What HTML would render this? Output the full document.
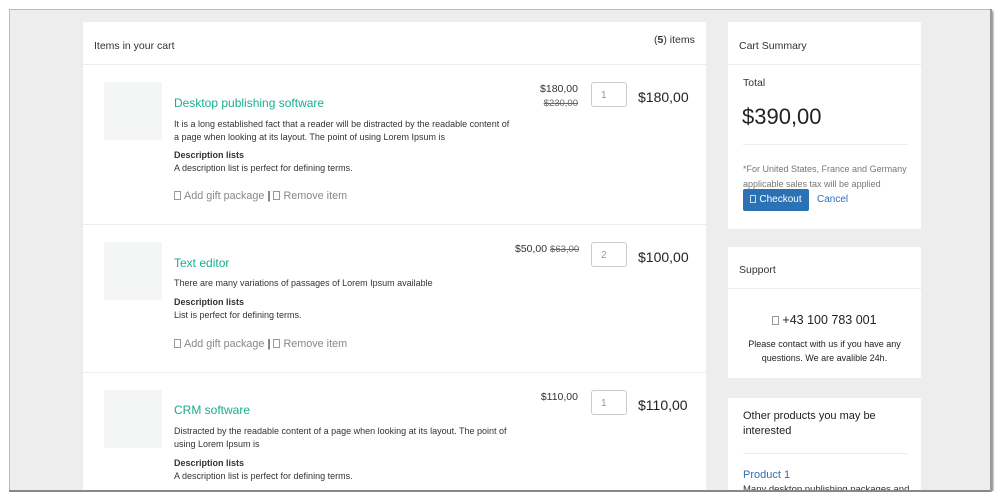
<!DOCTYPE html>
<html><head><meta charset="utf-8"><style>
*{margin:0;padding:0;box-sizing:border-box}
body{width:1000px;height:500px;background:#fff;font-family:"Liberation Sans",Arial,sans-serif;color:#333;position:relative;overflow:hidden}
.frame{position:absolute;left:9px;top:9px;width:982px;height:482px;background:#ededed;border:1px solid #bbb;box-shadow:2px 2px 2px #777}
.p{position:absolute;background:#fff}
.a{position:absolute;white-space:nowrap}
.hl{position:absolute;height:1px;background:#e8eded}
.img{position:absolute;width:58px;height:58px;background:#f4f6f6}
.t{font-size:12px;color:#1aae8c}
.d{font-size:9px;color:#333}
.b{font-size:9px;font-weight:bold}
.l{font-size:10.8px;color:#888}
.ic{display:inline-block;width:7px;height:9px;border:1px solid #999;vertical-align:-1px;margin-right:3px}
.pr{font-size:10.5px;text-align:right;width:80px}
.s{font-size:9.5px;color:#666;text-decoration:line-through}
.in{position:absolute;width:36px;height:25px;border:1px solid #ccc;border-radius:3px;font-size:10px;color:#999;padding:7px 0 0 9px}
.tot{font-size:14px;color:#222}
</style></head><body>
<div class="frame"></div>
<div class="p" style="left:83px;top:22px;width:623px;height:478px"></div>
<div class="hl" style="left:83px;top:64px;width:623px"></div>
<div class="hl" style="left:83px;top:224px;width:623px"></div>
<div class="hl" style="left:83px;top:372px;width:623px"></div>
<div class="a" style="left:94px;top:40px;font-size:10.5px">Items in your cart</div>
<div class="a" style="left:654px;top:34px;font-size:10.5px">(<b>5</b>) items</div>

<div class="img" style="left:104px;top:82px"></div>
<div class="a t" style="left:174px;top:96px">Desktop publishing software</div>
<div class="a d" style="left:174px;top:118px;line-height:12.5px">It is a long established fact that a reader will be distracted by the readable content of<br>a page when looking at its layout. The point of using Lorem Ipsum is</div>
<div class="a b" style="left:174px;top:150px">Description lists</div>
<div class="a d" style="left:174px;top:163px">A description list is perfect for defining terms.</div>
<div class="a l" style="left:174px;top:190px"><span class="ic"></span>Add gift package <b style="color:#555">|</b> <span class="ic"></span>Remove item</div>
<div class="a pr" style="left:498px;top:83px">$180,00</div>
<div class="a pr s" style="left:498px;top:98px">$230,00</div>
<div class="in" style="left:591px;top:82px">1</div>
<div class="a tot" style="left:638px;top:89px">$180,00</div>

<div class="img" style="left:104px;top:242px"></div>
<div class="a t" style="left:174px;top:256px">Text editor</div>
<div class="a d" style="left:174px;top:278px">There are many variations of passages of Lorem Ipsum available</div>
<div class="a b" style="left:174px;top:297px">Description lists</div>
<div class="a d" style="left:174px;top:310px">List is perfect for defining terms.</div>
<div class="a l" style="left:174px;top:338px"><span class="ic"></span>Add gift package <b style="color:#555">|</b> <span class="ic"></span>Remove item</div>
<div class="a" style="left:515px;top:243px;font-size:10.5px">$50,00 <span class="s">$63,00</span></div>
<div class="in" style="left:591px;top:242px">2</div>
<div class="a tot" style="left:638px;top:249px">$100,00</div>

<div class="img" style="left:104px;top:390px"></div>
<div class="a t" style="left:174px;top:403px">CRM software</div>
<div class="a d" style="left:174px;top:425px;line-height:12.5px">Distracted by the readable content of a page when looking at its layout. The point of<br>using Lorem Ipsum is</div>
<div class="a b" style="left:174px;top:458px">Description lists</div>
<div class="a d" style="left:174px;top:471px">A description list is perfect for defining terms.</div>
<div class="a pr" style="left:498px;top:391px">$110,00</div>
<div class="in" style="left:591px;top:390px">1</div>
<div class="a tot" style="left:638px;top:397px">$110,00</div>

<div class="p" style="left:728px;top:22px;width:193px;height:207px"></div>
<div class="hl" style="left:728px;top:64px;width:193px"></div>
<div class="a" style="left:739px;top:40px;font-size:10.5px">Cart Summary</div>
<div class="a" style="left:743px;top:77px;font-size:10.5px">Total</div>
<div class="a" style="left:742px;top:104px;font-size:22px;color:#222">$390,00</div>
<div class="hl" style="left:743px;top:144px;width:164px"></div>
<div class="a" style="left:743px;top:162px;font-size:9px;color:#777;line-height:15px">*For United States, France and Germany<br>applicable sales tax will be applied</div>
<div class="a" style="left:743px;top:189px;width:66px;height:22px;background:#2b72b5;border-radius:2px;color:#fff;font-size:10px;padding-top:5px;text-align:center"><span class="ic" style="border-color:#cde;width:6px;height:8px"></span>Checkout</div>
<div class="a" style="left:817px;top:194px;font-size:10px;color:#2b72b5">Cancel</div>

<div class="p" style="left:728px;top:247px;width:193px;height:131px"></div>
<div class="hl" style="left:728px;top:288px;width:193px"></div>
<div class="a" style="left:739px;top:264px;font-size:10.5px">Support</div>
<div class="a" style="left:728px;width:193px;text-align:center;top:313px;font-size:12.5px;color:#222"><span class="ic"></span>+43 100 783 001</div>
<div class="a" style="left:728px;width:193px;text-align:center;top:337px;font-size:9px;line-height:14px;color:#222">Please contact with us if you have any<br>questions. We are avalible 24h.</div>

<div class="p" style="left:728px;top:398px;width:193px;height:102px"></div>
<div class="a" style="left:743px;top:409px;font-size:11px;line-height:15px;color:#222">Other products you may be<br>interested</div>
<div class="hl" style="left:743px;top:453px;width:164px"></div>
<div class="a" style="left:743px;top:469px;font-size:11px;color:#2b72b5">Product 1</div>
<div class="a" style="left:743px;top:484px;font-size:9.5px;color:#333">Many desktop publishing packages and</div>
<div style="position:absolute;left:0;top:491px;width:1000px;height:9px;background:#fff"></div>
<div style="position:absolute;left:9px;top:490px;width:983px;height:2px;background:#888"></div>
<div style="position:absolute;left:990px;top:9px;width:2px;height:483px;background:#999"></div>
</body></html>
